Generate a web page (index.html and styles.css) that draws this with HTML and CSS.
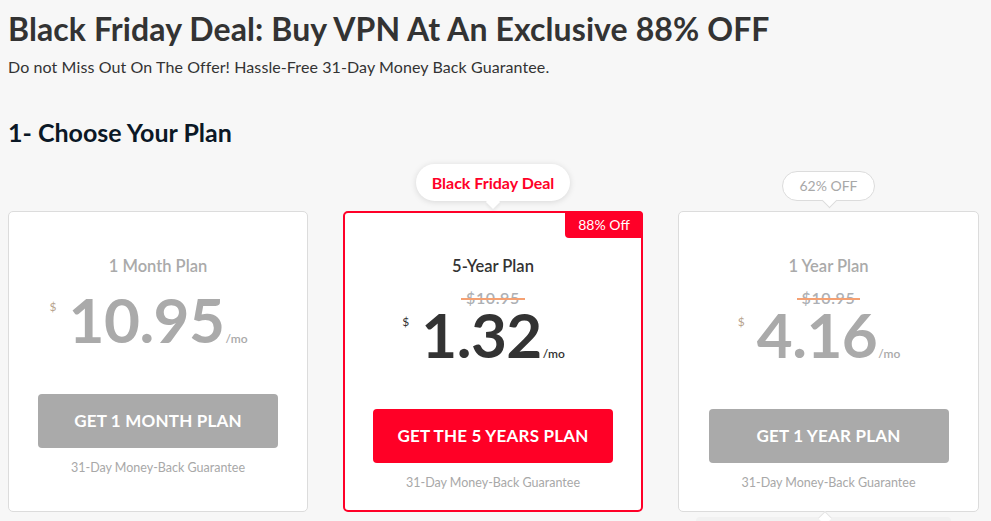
FILE: index.html
```html
<!DOCTYPE html>
<html lang="en">
<head>
<meta charset="utf-8">
<title>Black Friday Deal</title>
<link rel="stylesheet" href="styles.css">
</head>
<body>
<main class="page">
  <h1 class="title">Black Friday Deal: Buy VPN At An Exclusive 88% OFF</h1>
  <p class="subtitle">Do not Miss Out On The Offer! Hassle-Free 31-Day Money Back Guarantee.</p>
  <h2 class="step">1- Choose Your Plan</h2>

  <div class="plans">
    <div class="col">
      <div class="tagrow"></div>
      <div class="card">
        <div class="plan-name">1 Month Plan</div>
        <div class="price muted"><span class="num"><span class="cur">$</span>10.95</span><span class="per">/mo</span></div>
        <a class="btn btn-gray">GET 1 MONTH PLAN</a>
        <div class="guarantee">31-Day Money-Back Guarantee</div>
      </div>
    </div>

    <div class="col">
      <div class="tagrow">
        <div class="bubble bubble-deal">Black Friday Deal</div>
      </div>
      <div class="card card-featured">
        <div class="ribbon">88% Off</div>
        <div class="plan-name dark">5-Year Plan</div>
        <div class="strike"><span class="old">$10.95</span></div>
        <div class="price dark after-strike"><span class="num"><span class="cur">$</span>1.32</span><span class="per">/mo</span></div>
        <a class="btn btn-red">GET THE 5 YEARS PLAN</a>
        <div class="guarantee">31-Day Money-Back Guarantee</div>
      </div>
    </div>

    <div class="col">
      <div class="tagrow">
        <div class="bubble bubble-off">62% OFF</div>
      </div>
      <div class="card">
        <div class="plan-name">1 Year Plan</div>
        <div class="strike"><span class="old">$10.95</span></div>
        <div class="price muted after-strike"><span class="num"><span class="cur">$</span>4.16</span><span class="per">/mo</span></div>
        <a class="btn btn-gray">GET 1 YEAR PLAN</a>
        <div class="guarantee">31-Day Money-Back Guarantee</div>
      </div>
      <div class="below-tip"></div>
    </div>
  </div>
</main>
</body>
</html>
```

FILE: styles.css
```css
* { box-sizing: border-box; }

html, body {
  margin: 0;
  padding: 0;
  background: #f7f7f7;
  font-family: Lato, "Open Sans", "Liberation Sans", sans-serif;
  color: #333;
}

.page {
  padding: 0 8px;
}

.title {
  margin: 0;
  padding-top: 10px;
  font-size: 32px;
  line-height: 38px;
  font-weight: 700;
  color: #333;
  letter-spacing: 0.1px;
}

.subtitle {
  margin: 9px 0 0;
  font-size: 16px;
  line-height: 20px;
  color: #333;
  letter-spacing: 0.1px;
}

.step {
  margin: 40px 0 0;
  font-size: 25px;
  line-height: 30px;
  font-weight: 700;
  color: #0b1826;
}

.plans {
  display: grid;
  grid-template-columns: 300px 300px 301px;
  column-gap: 35px;
  margin-top: 17px;
}

.col {
  display: flex;
  flex-direction: column;
}

.tagrow {
  height: 47px;
  display: flex;
  align-items: flex-end;
  justify-content: center;
  padding-bottom: 10px;
}

.bubble {
  position: relative;
  background: #fff;
  text-align: center;
}

.bubble::after {
  content: "";
  position: absolute;
  left: 50%;
  bottom: -6px;
  width: 10px;
  height: 10px;
  margin-left: -5px;
  background: #fff;
  transform: rotate(45deg);
}

.bubble-deal {
  width: 154px;
  height: 37px;
  line-height: 37px;
  border-radius: 19px;
  font-size: 16px;
  font-weight: 700;
  color: #ff0028;
  box-shadow: 0 1px 6px rgba(0, 0, 0, 0.13);
}

.bubble-deal::after {
  box-shadow: 2px 2px 3px rgba(0, 0, 0, 0.06);
}

.bubble-off {
  width: 93px;
  height: 30px;
  line-height: 28px;
  border: 1px solid #dcdcdc;
  border-radius: 15px;
  font-size: 14px;
  color: #a8a8a8;
}

.bubble-off::after {
  border-right: 1px solid #dcdcdc;
  border-bottom: 1px solid #dcdcdc;
  bottom: -6px;
}

.card {
  position: relative;
  height: 301px;
  background: #fff;
  border: 1px solid #dcdcdc;
  border-radius: 5px;
  padding-top: 44px;
  display: flex;
  flex-direction: column;
  align-items: center;
}

.card-featured {
  border: 2px solid #ff0028;
  padding-top: 43px;
}

.ribbon {
  position: absolute;
  top: -2px;
  right: -2px;
  width: 78px;
  height: 27px;
  line-height: 27px;
  background: #ff0028;
  color: #fff;
  font-size: 14px;
  text-align: center;
  border-radius: 0 4px 0 4px;
}

.plan-name {
  font-size: 16.5px;
  line-height: 20px;
  font-weight: 600;
  color: #aaa;
}

.plan-name.dark {
  color: #333;
}

.strike {
  margin-top: 15px;
  height: 14px;
  line-height: 14px;
  font-size: 16px;
  font-weight: 600;
  letter-spacing: 0.6px;
  color: #adb0b4;
}

.strike .old {
  position: relative;
  display: inline-block;
}

.strike .old::after {
  content: "";
  position: absolute;
  left: -5px;
  right: -5px;
  top: 7px;
  height: 2px;
  background: #f5a173;
}

.price {
  margin-top: 12px;
  display: flex;
  align-items: baseline;
  height: 62px;
}

.price.after-strike {
  margin-top: -2px;
}

.price .num {
  position: relative;
  font-size: 62px;
  line-height: 62px;
  font-weight: 700;
  letter-spacing: -0.5px;
}

.price .cur {
  position: absolute;
  right: 100%;
  top: 12px;
  margin-right: 12px;
  font-size: 12px;
  line-height: 14px;
  font-weight: 400;
  letter-spacing: 0;
}

.price .per {
  font-size: 12px;
  line-height: 14px;
  font-weight: 600;
  margin-left: 1px;
}

.price.muted { color: #aaa; }
.price.muted .cur { color: #b8a48e; }
.price.dark { color: #333; }

.btn {
  display: block;
  margin-top: 44px;
  width: 240px;
  height: 54px;
  line-height: 54px;
  border-radius: 4px;
  text-align: center;
  color: #fff;
  font-size: 17px;
  font-weight: 700;
  letter-spacing: 0.2px;
}

.btn-gray { background: #aaaaaa; }
.btn-red { background: #ff0026; }

.guarantee {
  margin-top: 12px;
  font-size: 12.5px;
  line-height: 16px;
  color: #a8a8a8;
}

.below-tip {
  position: relative;
  margin: 5px 28px 0 18px;
  height: 20px;
  background: #f1f1f1;
  border-radius: 4px;
}

.below-tip::before {
  content: "";
  position: absolute;
  left: 50%;
  top: -4px;
  width: 9px;
  height: 9px;
  margin-left: -4px;
  background: #fff;
  transform: rotate(45deg);
  border-left: 1px solid #e4e4e4;
  border-top: 1px solid #e4e4e4;
}
```
